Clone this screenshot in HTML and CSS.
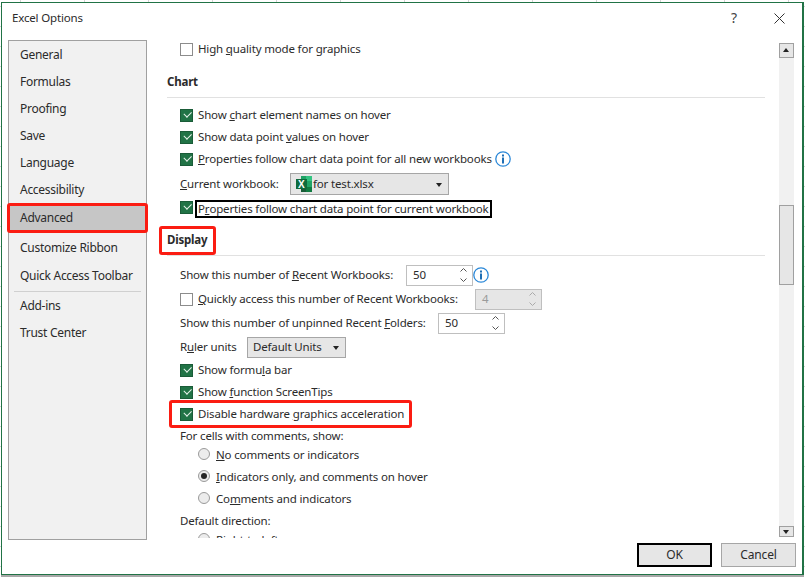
FILE: index.html
```html
<!DOCTYPE html>
<html lang="en">
<head>
<meta charset="utf-8">
<title>Excel Options</title>
<link rel="stylesheet" href="styles.css">
</head>
<body>
<div class="dialog">
  <header class="titlebar">
    <span class="title">Excel Options</span>
    <span class="help">?</span>
    <svg class="close" width="11" height="11" viewBox="0 0 11 11"><path d="M.5.5l10 10M10.5.5l-10 10" stroke="#333" fill="none"/></svg>
  </header>
  <div class="main">
    <nav class="side">
      <div class="nav">General</div>
      <div class="nav">Formulas</div>
      <div class="nav">Proofing</div>
      <div class="nav">Save</div>
      <div class="nav">Language</div>
      <div class="nav">Accessibility</div>
      <div class="nav selected">Advanced</div>
      <div class="nav after-sel">Customize Ribbon</div>
      <div class="nav quick">Quick Access Toolbar</div>
      <div class="sep"></div>
      <div class="nav">Add-ins</div>
      <div class="nav">Trust Center</div>
    </nav>
    <div class="content">
      <div class="scroll">
        <div class="row first"><i class="cb"></i><span>High <u>q</u>uality mode for graphics</span></div>
        <h3 class="section chart">Chart</h3>
        <div class="row"><i class="cb on"></i><span>Show <u>c</u>hart element names on hover</span></div>
        <div class="row"><i class="cb on"></i><span>Show data point <u>v</u>alues on hover</span></div>
        <div class="row"><i class="cb on"></i><span><u>P</u>roperties follow chart data point for all new workbooks</span>
          <svg class="info gap" width="16" height="16" viewBox="0 0 16 16"><circle cx="8" cy="8" r="7.2" fill="#fff" stroke="#2b88d8" stroke-width="1.3"/><rect x="7" y="3.5" width="2" height="2" fill="#1f6fb5"/><rect x="7" y="6.5" width="2" height="6" fill="#1f6fb5"/></svg></div>
        <div class="plain wb"><span class="label l-wb"><u>C</u>urrent workbook:</span>
          <div class="combo file"><svg width="16" height="16" viewBox="0 0 16 16"><rect x="5" y="0" width="11" height="16" fill="#21a366"/><rect x="10" y="0" width="6" height="5" fill="#33c481"/><rect x="10" y="11" width="6" height="5" fill="#107c41"/><rect x="5" y="11" width="5" height="5" fill="#185c37"/><rect x="0" y="3" width="11" height="10" fill="#0f6b3d"/><text x="2" y="12" class="xl">X</text></svg><span>for test.xlsx</span><i class="caret"></i></div>
        </div>
        <div class="row focusrow"><i class="cb on"></i><span class="focus">P<u>r</u>operties follow chart data point for current workbook</span></div>
        <h3 class="section display">Display</h3>
        <div class="plain n1"><span class="label l-n1">Show this number of <u>R</u>ecent Workbooks:</span>
          <div class="spin"><span>50</span><span class="arrows"><svg width="7" height="4" viewBox="0 0 7 4"><path d="M.5 3.5l3-3 3 3" stroke="#555" fill="none"/></svg><svg width="7" height="4" viewBox="0 0 7 4"><path d="M.5.5l3 3 3-3" stroke="#555" fill="none"/></svg></span></div>
          <svg class="info" width="16" height="16" viewBox="0 0 16 16"><circle cx="8" cy="8" r="7.2" fill="#fff" stroke="#2b88d8" stroke-width="1.3"/><rect x="7" y="3.5" width="2" height="2" fill="#1f6fb5"/><rect x="7" y="6.5" width="2" height="6" fill="#1f6fb5"/></svg>
        </div>
        <div class="row n2"><i class="cb"></i><span class="label l-n2"><u>Q</u>uickly access this number of Recent Workbooks:</span>
          <div class="spin off"><span>4</span><span class="arrows"><svg width="7" height="4" viewBox="0 0 7 4"><path d="M.5 3.5l3-3 3 3" stroke="#aaa" fill="none"/></svg><svg width="7" height="4" viewBox="0 0 7 4"><path d="M.5.5l3 3 3-3" stroke="#aaa" fill="none"/></svg></span></div>
        </div>
        <div class="plain n3"><span class="label l-n3">Show this number of unpinned Recent <u>F</u>olders:</span>
          <div class="spin"><span>50</span><span class="arrows"><svg width="7" height="4" viewBox="0 0 7 4"><path d="M.5 3.5l3-3 3 3" stroke="#555" fill="none"/></svg><svg width="7" height="4" viewBox="0 0 7 4"><path d="M.5.5l3 3 3-3" stroke="#555" fill="none"/></svg></span></div>
        </div>
        <div class="plain n4"><span class="label l-n4">R<u>u</u>ler units</span>
          <div class="combo units"><span>Default Units</span><i class="caret"></i></div>
        </div>
        <div class="row n5"><i class="cb on"></i><span>Show formu<u>l</u>a bar</span></div>
        <div class="row"><i class="cb on"></i><span>Show <u>f</u>unction ScreenTips</span></div>
        <div class="row"><i class="cb on"></i><span>Disable hardware <u>g</u>raphics acceleration</span></div>
        <div class="plain"><span>For cells with comments, show:</span></div>
        <div class="radio r1"><i class="rd"></i><span><u>N</u>o comments or indicators</span></div>
        <div class="radio"><i class="rd on"></i><span><u>I</u>ndicators only, and comments on hover</span></div>
        <div class="radio"><i class="rd"></i><span>Co<u>m</u>ments and indicators</span></div>
        <div class="plain"><span>Default direction:</span></div>
        <div class="radio r1"><i class="rd"></i><span>Right-to-left</span></div>
      </div>
      <div class="scrollbar">
        <div class="sbtn"><i class="up"></i></div>
        <div class="track"><div class="thumb"></div></div>
        <div class="sbtn short"><i class="down"></i></div>
      </div>
    </div>
  </div>
  <footer class="actions">
    <button class="btn default">OK</button>
    <button class="btn">Cancel</button>
  </footer>
  <div class="mark m-adv"></div>
  <div class="mark m-disp"></div>
  <div class="mark m-hw"></div>
</div>
</body>
</html>
```
FILE: styles.css
```css
* { box-sizing: border-box; }
html, body { margin: 0; height: 100%; }
body {
  width: 805px;
  height: 577px;
  overflow: hidden;
  padding: 2px 1px 0 1px;
  background-color: #fff;
  background-image:
    linear-gradient(90deg, #d4d4d4 1px, transparent 1px),
    linear-gradient(0deg, #d4d4d4 1px, transparent 1px);
  background-size: 64px 20px;
  background-position: 20px 0, 0 7px;
  font: 11.5px/16px "Noto Sans", "Open Sans", sans-serif;
  letter-spacing: -0.16px;
  color: #2b2b2b;
}
.dialog {
  position: relative;
  width: 803px;
  height: 573px;
  background: #fff;
  border-style: solid;
  border-color: #217346;
  border-width: 1px 2px 1px 1px;
  box-shadow: 0 2px 0 #a8a8a8;
  display: flex;
  flex-direction: column;
}
.titlebar {
  height: 37px;
  display: flex;
  align-items: center;
  padding: 0 17px 7px 10px;
  flex: none;
}
.title { flex: 1; }
.help { font-size: 14px; margin-right: 37px; color: #444; }
.main { flex: none; height: 500px; display: flex; padding-left: 6px; }
.side {
  width: 139px;
  height: 500px;
  flex: none;
  background: #f1f1f1;
  border: 1px solid #a0a0a0;
  padding: 2px 1px 0;
  white-space: nowrap;
}
.nav { height: 27px; padding: 4px 10px; font-size: 12px; letter-spacing: -0.28px; }
.nav.selected { background: #c6c6c6; padding-top: 5px; }
.nav.after-sel { margin-top: 3px; padding-top: 5px; }
.nav.quick { margin-top: 1px; padding-top: 5px; }
.sep { height: 1px; background: #d0d0d0; margin: 1px 4px 2px; }
.content { flex: 1; display: flex; height: 500px; min-width: 0; }
.scroll { width: 632px; padding-left: 20px; height: 498px; overflow: hidden; flex: none; }
.row, .plain, .radio { display: flex; align-items: center; height: 22px; white-space: nowrap; }
.row.first { margin-top: -2px; }
.cb {
  width: 13px; height: 13px; flex: none; margin: 0 5px 0 13px;
  border: 1px solid #8c8c8c; background: #fff; position: relative;
}
.cb.on { background: #217346; border-color: #1a5c38; }
.cb.on::after {
  content: ""; position: absolute; left: 2.5px; top: 1.5px; width: 6px; height: 3.5px;
  border-left: 1px solid #e8f2ec; border-bottom: 1px solid #e8f2ec; transform: rotate(-45deg);
}
.section {
  margin: 13px 0 0; font-size: 11.5px; line-height: 16px; font-weight: 700; letter-spacing: -0.2px;
  border-bottom: 1px solid #e1e1e1; width: 598px;
}
.section.chart { height: 25px; margin-bottom: 6px; padding-top: 1px; }
.section.display { height: 24px; margin-bottom: 8px; }
.plain { padding-left: 13px; }
.label { flex: none; display: block; }
.l-wb { width: 110px; }
.l-n1 { width: 226px; }
.l-n2 { width: 277px; }
.l-n3 { width: 258px; }
.l-n4 { width: 67px; }
.wb { margin-top: 3px; }
.focusrow { height: 24px; }
.focus { border: 2px solid #000; height: 18px; display: flex; align-items: center; padding: 0 1px; margin: 4px 0 0 -3px; white-space: pre; }
.combo {
  height: 21px; border: 1px solid #a6a6a6; background: #e6e6e6;
  display: flex; align-items: center; position: relative;
}
.combo.file { width: 159px; padding-left: 5px; gap: 1px; height: 22px; }
.combo.units { width: 99px; padding-left: 5px; }
.caret {
  position: absolute; right: 6px; top: 50%; margin-top: -1px; width: 0; height: 0;
  border-left: 3.5px solid transparent; border-right: 3.5px solid transparent; border-top: 4px solid #222;
}
.xl { font: 700 10px "Liberation Sans", sans-serif; fill: #fff; letter-spacing: 0; }
.info { flex: none; }
.info.gap { margin-left: 3px; }
.spin {
  height: 21px; width: 67px; border: 1px solid #bfbfbf; background: #fff; flex: none;
  display: flex; align-items: center; justify-content: space-between; padding: 0 5px 0 6px;
}
.spin.off { background: #e6e6e6; color: #9a9a9a; }
.arrows { display: flex; flex-direction: column; gap: 6px; }
.arrows svg { display: block; }
.n2, .n3, .n4 { margin-top: 2px; }
.n5 { margin-top: 1px; }
.radio { padding-left: 18px; }
.radio.r1 { margin-top: -3px; }
.rd {
  width: 12px; height: 12px; border-radius: 50%; border: 1px solid #9a9a9a; background: #ececec;
  margin: 0 6px 3px 13px; flex: none; position: relative;
}
.rd.on::after { content: ""; position: absolute; left: 2px; top: 2px; width: 6px; height: 6px; border-radius: 50%; background: #262626; }
.scrollbar { width: 15px; flex: none; margin-top: 3px; display: flex; flex-direction: column; height: 494px; }
.sbtn { width: 15px; height: 15px; border: 1px solid #a0a0a0; background: #e6e6e6; flex: none; position: relative; }
.sbtn.short { height: 11px; }
.up, .down { position: absolute; left: 3px; width: 0; height: 0; border-left: 3.5px solid transparent; border-right: 3.5px solid transparent; }
.up { top: 4px; border-bottom: 4px solid #222; }
.down { top: 3px; border-top: 4px solid #222; }
.track { flex: 1; background: #f1f1f1; padding-top: 147px; }
.thumb { height: 80px; width: 15px; border: 1px solid #a0a0a0; background: #e6e6e6; }
.actions { flex: none; display: flex; justify-content: flex-end; gap: 9px; padding: 3px 6px 0 0; }
.btn {
  width: 75px; height: 24px; font: inherit; font-size: 12px; letter-spacing: inherit; color: #2b2b2b; background: #e6e6e6;
  border: 1px solid #a6a6a6; padding: 0;
}
.btn.default { border: 2px solid #000; }
.mark { position: absolute; border: 3px solid #fb1c12; border-radius: 3px; pointer-events: none; }
.m-adv { left: 5px; top: 200px; width: 141px; height: 30px; }
.m-disp { left: 157px; top: 223px; width: 57px; height: 29px; }
.m-hw { left: 167px; top: 397px; width: 243px; height: 28px; }
```
